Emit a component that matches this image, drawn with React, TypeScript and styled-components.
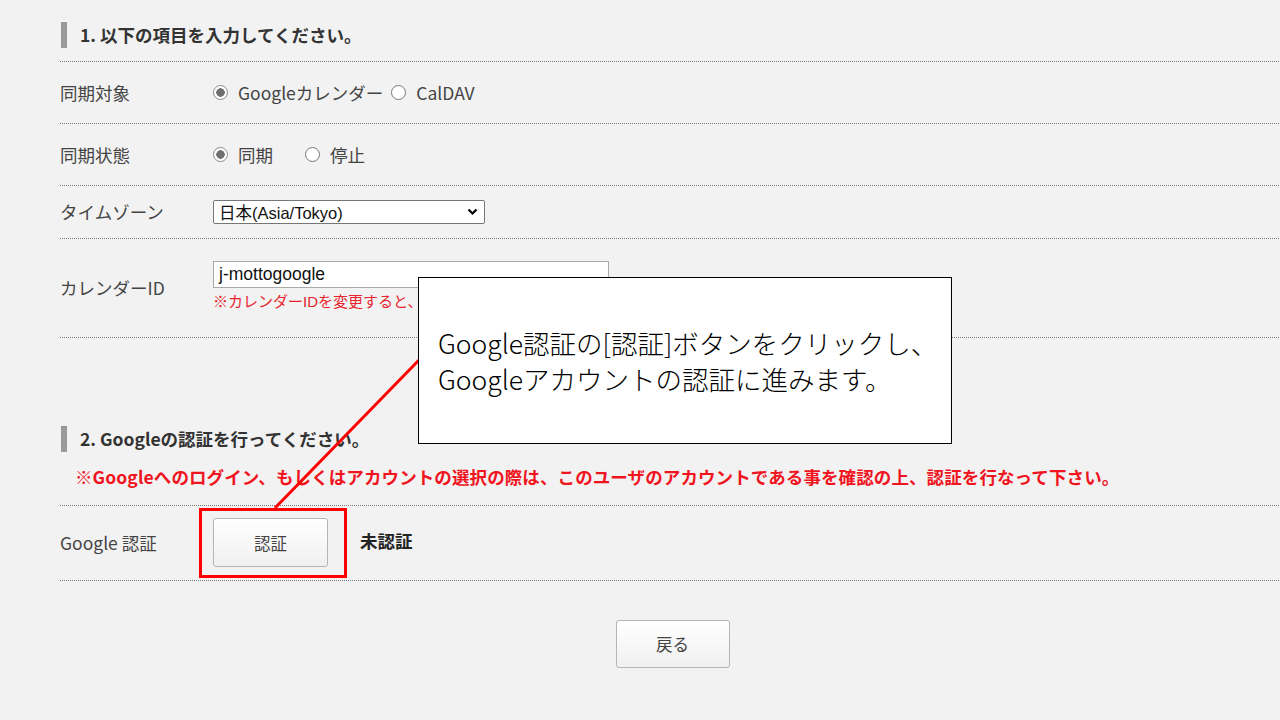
import React from 'react';
import styled, { createGlobalStyle } from 'styled-components';

const GlobalStyle = createGlobalStyle`
  html, body {
    margin: 0;
    padding: 0;
    background: #f2f2f2;
    overflow: hidden;
  }
  body {
    font-family: "Noto Sans CJK JP", "Noto Sans", sans-serif;
    color: #444;
  }
`

const Page = styled.div`
  position: relative;
  width: 1280px;
  height: 720px;
  overflow: hidden;
`
const Content = styled.div`
  width: 1225px;
  margin-left: 60px;
`
const SectionTitle = styled.h2<{ $top: number; $bottom: number }>`
  display: flex;
  align-items: center;
  margin: ${p => p.$top}px 0 ${p => p.$bottom}px 1px;
  height: 26px;
  padding-left: 13px;
  border-left: 6px solid #9a9a9a;
  font-size: 17.5px;
  font-weight: 700;
  color: #333;
  line-height: 26px;
`
const Table = styled.div`
  border-top: 1px dotted #777;
`
const Row = styled.div<{ $h: number }>`
  box-sizing: border-box;
  display: grid;
  grid-template-columns: 153px 1fr;
  align-items: center;
  height: ${p => p.$h}px;
  border-bottom: 1px dotted #777;
`
const Label = styled.div`
  font-size: 17.5px;
  color: #444;
  line-height: 1;
`
const Cell = styled.div`
  position: relative;
  display: flex;
  align-items: center;
  font-size: 17.5px;
  color: #444;
`
const Stack = styled.div`
  display: flex;
  flex-direction: column;
  gap: 6px;
  margin-top: -6px;
`
const RadioItem = styled.label<{ $gap: number }>`
  display: inline-flex;
  align-items: center;
  gap: 10px;
  margin-right: ${p => p.$gap}px;
  line-height: 1;
`
const Radio = styled.span<{ $checked?: boolean }>`
  box-sizing: border-box;
  width: 15px;
  height: 15px;
  border-radius: 50%;
  border: 1px solid ${p => (p.$checked ? '#8a8a8a' : '#767676')};
  background: ${p => (p.$checked ? 'radial-gradient(circle, #6f6f6f 0 4px, #fff 4.5px)' : '#fff')};
`
const Select = styled.div`
  box-sizing: border-box;
  display: flex;
  align-items: center;
  justify-content: space-between;
  width: 272px;
  height: 24px;
  padding: 0 6px 0 5px;
  background: #fff;
  border: 1px solid #767676;
  border-radius: 2px;
  font-family: "Liberation Sans", Arial, "Noto Sans CJK JP", sans-serif;
  font-size: 16.5px;
  color: #111;
`
const TextInput = styled.div`
  box-sizing: border-box;
  display: flex;
  align-items: center;
  width: 396px;
  height: 27px;
  padding-left: 5px;
  background: #fff;
  border: 1px solid #a9a9a9;
  font-family: "Liberation Sans", Arial, sans-serif;
  font-size: 17.5px;
  color: #111;
`
const Note = styled.div`
  font-family: "Liberation Sans", Arial, "Noto Sans CJK JP", sans-serif;
  font-size: 15px;
  color: #e8242c;
  line-height: 1;
`
const Warning = styled.p`
  margin: 16px 0 19px 15px;
  font-size: 17.5px;
  font-weight: 700;
  color: #f0141e;
  line-height: 1;
  letter-spacing: 0.1px;
  white-space: nowrap;
`
const Button = styled.button<{ $w: number; $h: number }>`
  width: ${p => p.$w}px;
  height: ${p => p.$h}px;
  border: 1px solid #b5b5b5;
  border-radius: 3px;
  background: linear-gradient(#ffffff, #f0f0f0);
  font-family: "Noto Sans CJK JP", sans-serif;
  font-size: 16.5px;
  color: #444;
  padding: 0;
`
const AuthCell = styled(Cell)`
  gap: 32px;
`
const Highlight = styled.div`
  position: absolute;
  left: -14px;
  top: -10px;
  width: 148px;
  height: 70px;
  box-sizing: border-box;
  border: 3px solid #f00;
  pointer-events: none;
`
const Status = styled.span`
  font-weight: 700;
  color: #222;
  margin-top: -5px;
`
const Footer = styled.div`
  display: flex;
  justify-content: center;
  margin-top: 39px;
`
const Callout = styled.div`
  position: absolute;
  left: 418px;
  top: 277px;
  box-sizing: border-box;
  width: 534px;
  height: 167px;
  display: flex;
  flex-direction: column;
  justify-content: center;
  padding: 0 0 0 19px;
  background: #fff;
  border: 1px solid #000;
  font-family: "Noto Sans CJK JP", sans-serif;
  font-weight: 300;
  font-size: 26.5px;
  color: #000;
  line-height: 36px;
  white-space: nowrap;
`
const Pointer = styled.svg`
  position: absolute;
  left: 0;
  top: 0;
  pointer-events: none;
`

export default function App() {
  return (
    <Page>
      <GlobalStyle />
      <Content>
        <SectionTitle $top={22} $bottom={13}>1. 以下の項目を入力してください。</SectionTitle>
        <Table>
          <Row $h={62}>
            <Label>同期対象</Label>
            <Cell>
              <RadioItem $gap={8}><Radio $checked />Googleカレンダー</RadioItem>
              <RadioItem $gap={0}><Radio />CalDAV</RadioItem>
            </Cell>
          </Row>
          <Row $h={62}>
            <Label>同期状態</Label>
            <Cell>
              <RadioItem $gap={32}><Radio $checked />同期</RadioItem>
              <RadioItem $gap={0}><Radio />停止</RadioItem>
            </Cell>
          </Row>
          <Row $h={53}>
            <Label>タイムゾーン</Label>
            <Cell>
              <Select>
                <span>日本(Asia/Tokyo)</span>
                <svg width="11" height="8" viewBox="0 0 11 8">
                  <path d="M1.5 1.5 L5.5 5.5 L9.5 1.5" fill="none" stroke="#000" strokeWidth="2.2" />
                </svg>
              </Select>
            </Cell>
          </Row>
          <Row $h={99}>
            <Label>カレンダーID</Label>
            <Cell>
              <Stack>
                <TextInput>j-mottogoogle</TextInput>
                <Note>※カレンダーIDを変更すると、</Note>
              </Stack>
            </Cell>
          </Row>
        </Table>

        <SectionTitle $top={88} $bottom={0}>2. Googleの認証を行ってください。</SectionTitle>
        <Warning>※Googleへのログイン、もしくはアカウントの選択の際は、このユーザのアカウントである事を確認の上、認証を行なって下さい。</Warning>
        <Table>
          <Row $h={75}>
            <Label>Google 認証</Label>
            <AuthCell>
              <Button $w={115} $h={49}>認証</Button>
              <Status>未認証</Status>
              <Highlight />
            </AuthCell>
          </Row>
        </Table>

        <Footer>
          <Button $w={114} $h={48}>戻る</Button>
        </Footer>
      </Content>

      <Pointer width="1280" height="720" viewBox="0 0 1280 720">
        <line x1="275" y1="508" x2="419" y2="360" stroke="#f00" strokeWidth="3" />
      </Pointer>
      <Callout>
        <div>Google認証の[認証]ボタンをクリックし、</div>
        <div>Googleアカウントの認証に進みます。</div>
      </Callout>
    </Page>
  );
}
